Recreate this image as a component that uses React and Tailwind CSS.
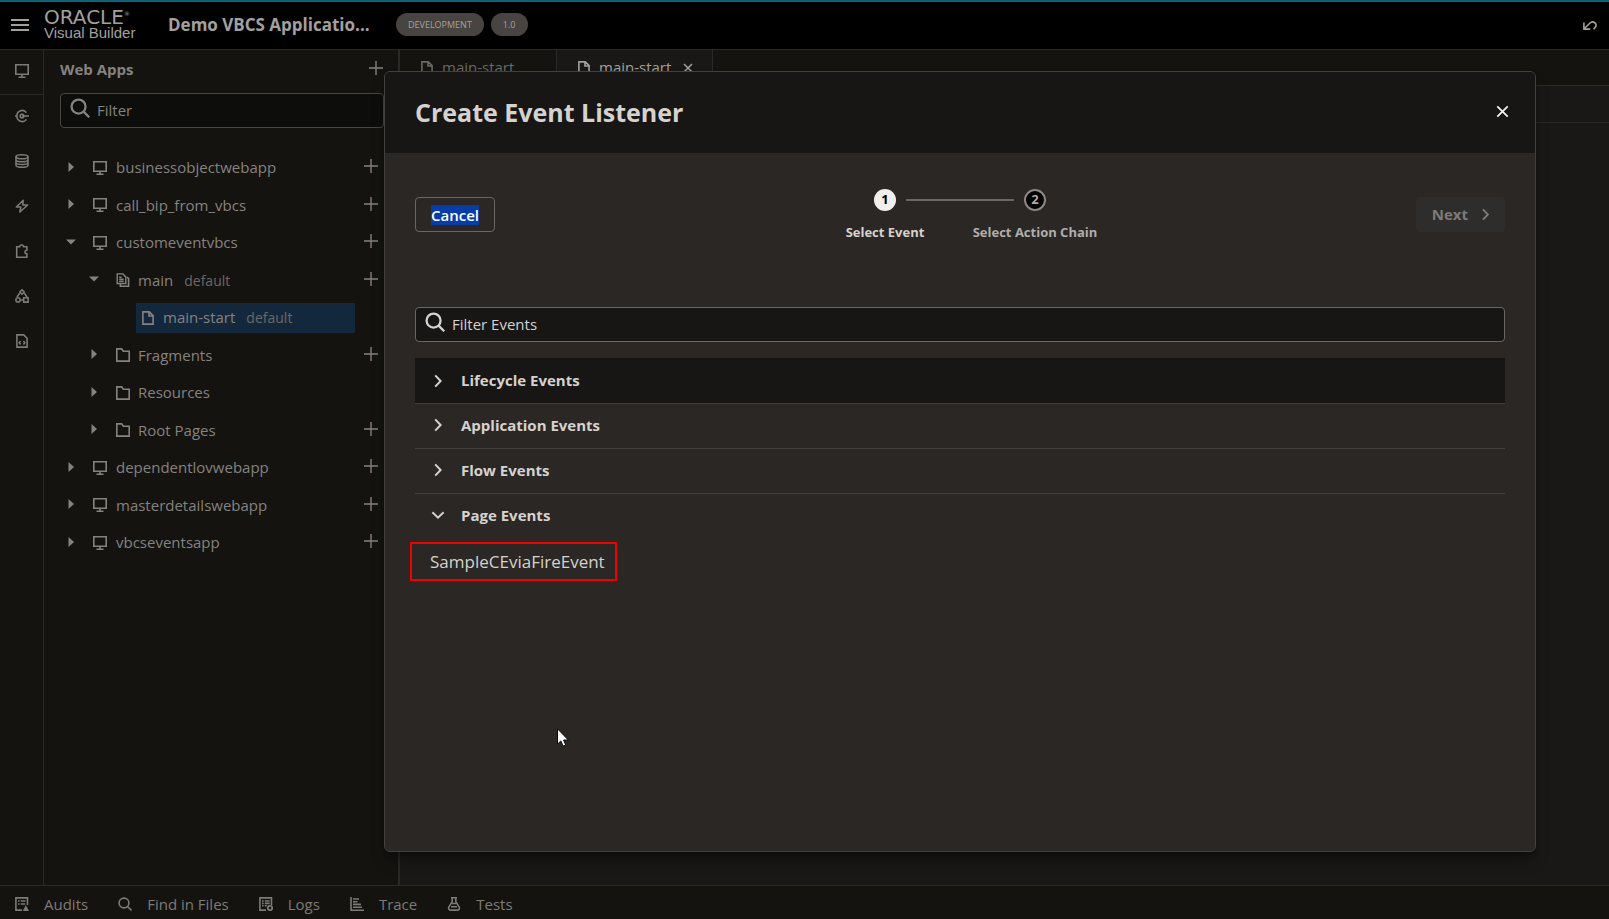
import React, { useState } from 'react';

const Svg = ({ size = 14, className = '', children }) => (
  <svg
    width={size}
    height={size}
    viewBox="0 0 14 14"
    fill="none"
    stroke="currentColor"
    strokeWidth="1.6"
    aria-hidden="true"
    className={`shrink-0 ${className}`}
  >
    {children}
  </svg>
);

const Icons = {
  Monitor: (props) => (
    <Svg {...props}>
      <path d="M.8 .8h12.4v9.4H.8zM7 10v3M3.5 13.2h7" />
    </Svg>
  ),
  Service: (props) => (
    <Svg {...props}>
      <path d="M11.4 3.6A5.2 5.2 0 0 0 2 7a5.2 5.2 0 0 0 9.4 3.4M0 7h2M7 7h7" />
      <circle cx="7" cy="7" r="1.8" />
    </Svg>
  ),
  Database: (props) => (
    <Svg {...props}>
      <ellipse cx="7" cy="2.8" rx="6" ry="2" />
      <path d="M1 2.8v8.4c0 1.1 2.7 2 6 2s6-.9 6-2V2.8M1 5.7c0 1.1 2.7 2 6 2s6-.9 6-2M1 8.5c0 1.1 2.7 2 6 2s6-.9 6-2" />
    </Svg>
  ),
  Bolt: (props) => (
    <Svg {...props}>
      <path d="M8.2 1.2 1.3 8h4.5l-.9 5L12.6 6H7.7z" strokeLinejoin="round" />
    </Svg>
  ),
  Puzzle: (props) => (
    <Svg {...props}>
      <path d="M1.7 2.8h3c0-2.4 4-2.4 4 0h3.2v3.5c-2.6 0-2.6 3.4 0 3.4v3.5H1.7z" />
    </Svg>
  ),
  Shapes: (props) => (
    <Svg {...props}>
      <path d="M7 .8 9.2 3 7 5.2 4.8 3zM8.7 8.7h4.4v4.4H8.7zM4.6 4.2 2 8M9.4 4.2 12 8M5.2 11h3.2" />
      <circle cx="3" cy="10.9" r="2.1" />
    </Svg>
  ),
  Source: (props) => (
    <Svg {...props}>
      <path d="M1.9 .9h6.8l3.4 3.4v8.8H1.9zM5.6 7 4.2 8.7l1.4 1.7M8.4 7l1.4 1.7-1.4 1.7" />
    </Svg>
  ),
  File: (props) => (
    <Svg {...props}>
      <path d="M1.9 .9h6.4l3.8 3.8v8.4H1.9zM8 1v4h4" />
    </Svg>
  ),
  Files: (props) => (
    <Svg {...props}>
      <path d="M1.2 .9h5.6l3 3v6.6H1.2zM3.2 4.2h2.4M3.2 6.2h4.4M3.2 8.2h4.4" strokeWidth="1.4" />
      <path d="M11 4l1.6 1.6v7.6H4.4v-2.4" />
    </Svg>
  ),
  Folder: (props) => (
    <Svg {...props}>
      <path d="M.8 .9h4.9l1.6 2.4h5.9v9.8H.8z" />
    </Svg>
  ),
  Search: (props) => (
    <Svg {...props}>
      <circle cx="6" cy="6" r="4.9" />
      <path d="m9.5 9.5 4 4" />
    </Svg>
  ),
  Plus: (props) => (
    <Svg {...props}>
      <path d="M7 0v14M0 7h14" strokeWidth="1.4" />
    </Svg>
  ),
  Close: (props) => (
    <Svg {...props}>
      <path d="m1.4 1.4 11.2 11.2M12.6 1.4 1.4 12.6" strokeWidth="2" />
    </Svg>
  ),
  ChevronRight: (props) => (
    <Svg {...props}>
      <path d="m4.2 1.4 5.4 5.6-5.4 5.6" strokeWidth="2" />
    </Svg>
  ),
  ChevronDown: (props) => (
    <Svg {...props}>
      <path d="m1.4 4.2 5.6 5.4 5.6-5.4" strokeWidth="2" />
    </Svg>
  ),
  CaretRight: (props) => (
    <Svg {...props}>
      <path d="M4.5 2v10l5.5-5z" fill="currentColor" stroke="none" />
    </Svg>
  ),
  CaretDown: (props) => (
    <Svg {...props}>
      <path d="M2 4.5h10L7 9.5z" fill="currentColor" stroke="none" />
    </Svg>
  ),
  Undo: (props) => (
    <Svg {...props}>
      <path d="M.9 4.5v6.6h6.3M1.2 10.8l5.6-5.6c3.2-3.2 8.4.6 5.4 4.2l-1.7 1.8" />
    </Svg>
  ),
  Audits: (props) => (
    <Svg {...props}>
      <path d="M7 13.1H.9V.9h11.6v7M3 4h1.6M5.8 4h4.8M3 7h1.6M5.8 7h4.4" />
      <path d="M10.8 8 14 14H7.8z" fill="currentColor" stroke="none" />
    </Svg>
  ),
  Logs: (props) => (
    <Svg {...props}>
      <path d="M7 13.1H.9V.9h11.6v7M3 4h1.6M5.8 4h4.8M3 6.4h1.6M5.8 6.4h4.8M3 8.8h1.6M5.8 8.8h2" />
      <circle cx="11" cy="11" r="2.2" strokeWidth="1.8" />
    </Svg>
  ),
  Trace: (props) => (
    <Svg {...props}>
      <path d="M1 0v13.2h13M3 2h6M3 4.7h4.5M3 7.4h8M3 10.2h9" />
    </Svg>
  ),
  Flask: (props) => (
    <Svg {...props}>
      <path d="M4 .8h6M5.2 1v3.6L1.8 10c-.6 1.6 0 3.1 1.6 3.1h7.2c1.6 0 2.2-1.5 1.6-3.1L8.8 4.6V1M5 6.5h4M4 9.8h6" />
    </Svg>
  ),
};

const railItems = [
  { label: 'Web Apps', icon: Icons.Monitor },
  { label: 'Services', icon: Icons.Service },
  { label: 'Business Objects', icon: Icons.Database },
  { label: 'Processes', icon: Icons.Bolt },
  { label: 'Components', icon: Icons.Puzzle },
  { label: 'Layouts', icon: Icons.Shapes },
  { label: 'Source', icon: Icons.Source },
];

const treeItems = [
  { name: 'businessobjectwebapp', icon: Icons.Monitor, level: 0, add: true },
  { name: 'call_bip_from_vbcs', icon: Icons.Monitor, level: 0, add: true },
  { name: 'customeventvbcs', icon: Icons.Monitor, level: 0, add: true, open: true },
  { name: 'main', note: 'default', icon: Icons.Files, level: 1, add: true, open: true },
  { name: 'main-start', note: 'default', icon: Icons.File, level: 2, selected: true },
  { name: 'Fragments', icon: Icons.Folder, level: 1, add: true },
  { name: 'Resources', icon: Icons.Folder, level: 1 },
  { name: 'Root Pages', icon: Icons.Folder, level: 1, add: true },
  { name: 'dependentlovwebapp', icon: Icons.Monitor, level: 0, add: true },
  { name: 'masterdetailswebapp', icon: Icons.Monitor, level: 0, add: true },
  { name: 'vbcseventsapp', icon: Icons.Monitor, level: 0, add: true },
];

const footerItems = [
  { label: 'Audits', icon: Icons.Audits },
  { label: 'Find in Files', icon: Icons.Search },
  { label: 'Logs', icon: Icons.Logs },
  { label: 'Trace', icon: Icons.Trace },
  { label: 'Tests', icon: Icons.Flask },
];

const eventGroups = [
  { name: 'Lifecycle Events', events: [] },
  { name: 'Application Events', events: [] },
  { name: 'Flow Events', events: [] },
  { name: 'Page Events', events: ['SampleCEviaFireEvent'] },
];

const Header = () => (
  <header className="flex h-[50px] shrink-0 items-center border-t-2 border-b border-t-[#0b6478] border-b-[#2a2927] bg-black pr-3 pb-[2px] pl-[11px] text-[#a3a09d]">
    <button type="button" aria-label="Menu" className="flex w-[18px] flex-col gap-[3px]">
      <span className="h-[2px] bg-current" />
      <span className="h-[2px] bg-current" />
      <span className="h-[2px] bg-current" />
    </button>
    <div className="ml-[15px] w-[124px] shrink-0">
      <div className="flex h-4 items-center font-['DejaVu_Sans',sans-serif] text-[20px] leading-4">
        ORACLE<sup className="text-[6px]">®</sup>
      </div>
      <div className="font-['Liberation_Sans',sans-serif] text-[15px] leading-4">Visual Builder</div>
    </div>
    <h1 className="w-[204px] shrink-0 text-[17px] font-bold whitespace-nowrap">Demo VBCS Applicatio...</h1>
    <span className="ml-6 flex h-[23px] items-center rounded-full bg-[#484441] px-3 text-[9px] font-medium">DEVELOPMENT</span>
    <span className="ml-[7px] flex h-[23px] items-center rounded-full bg-[#484441] px-3 text-[9px] font-medium">1.0</span>
    <button type="button" aria-label="Undo" className="ml-auto">
      <Icons.Undo />
    </button>
  </header>
);

const Rail = () => (
  <nav className="flex w-11 shrink-0 flex-col border-r border-[#2a2927]">
    {railItems.map(({ label, icon: Icon }) => (
      <button
        key={label}
        type="button"
        aria-label={label}
        className="flex h-[45px] items-center justify-center border-[#2a2927] pb-[3px] text-[#7d7a77] first:border-b"
      >
        <Icon />
      </button>
    ))}
  </nav>
);

const TreeRow = ({ item }) => {
  const Icon = item.icon;
  const indent = ['pl-5', 'pl-[43px]', 'pl-[92px]'][item.level];
  const gap = item.level === 0 ? 'gap-[9px]' : 'gap-2';

  return (
    <li className={`flex h-[37px] items-center even:h-[38px] ${indent}`}>
      {!item.selected && (
        <button type="button" aria-label={`Toggle ${item.name}`} className="mr-[15px] pb-[2px]">
          {item.open ? <Icons.CaretDown /> : <Icons.CaretRight />}
        </button>
      )}
      <a
        href="#"
        className={`flex h-[30px] items-center ${gap} ${item.selected ? 'w-[219px] bg-[#14283d] pl-[5px]' : ''}`}
      >
        <Icon />
        <span>{item.name}</span>
        {item.note && <span className="ml-[3px] text-[14px] text-[#6b6865]">{item.note}</span>}
      </a>
      {item.add && (
        <button type="button" aria-label={`Add to ${item.name}`} className="mr-5 ml-auto pb-[3px]">
          <Icons.Plus />
        </button>
      )}
    </li>
  );
};

const Sidebar = () => (
  <aside className="w-[356px] shrink-0 border-r-2 border-[#2a2927] text-[15px] text-[#85827f]">
    <div className="flex h-[43px] items-center justify-between pr-[15px] pb-1 pl-4">
      <h2 className="font-bold">Web Apps</h2>
      <button type="button" aria-label="Add web app" className="pb-1">
        <Icons.Plus />
      </button>
    </div>
    <label className="mr-[14px] ml-4 flex h-[35px] items-center gap-[7px] rounded-sm border border-[#484542] bg-[#0d0d0b] pl-[9px]">
      <Icons.Search size={20} className="mb-[6px]" />
      <input
        type="text"
        aria-label="Filter"
        placeholder="Filter"
        className="min-w-0 flex-1 bg-transparent outline-none placeholder:text-[#85827f]"
      />
    </label>
    <ul className="mt-[21px]">
      {treeItems.map((item) => (
        <TreeRow key={item.name} item={item} />
      ))}
    </ul>
  </aside>
);

const Editor = () => (
  <main className="min-w-0 flex-1 bg-[#191816] text-[15px] text-[#6b6865]">
    <div className="flex h-9 border-b border-[#2a2927] bg-[#141310]">
      <button type="button" className="flex w-[157px] items-center gap-2 border-r border-[#2a2927] pl-5">
        <Icons.File />
        main-start
      </button>
      <div className="flex w-[156px] items-center border-r border-[#2a2927] bg-[#191816] pl-5 text-[#a3a09d]">
        <button type="button" className="flex items-center gap-2">
          <Icons.File />
          main-start
        </button>
        <button type="button" aria-label="Close tab" className="ml-3">
          <Icons.Close size={10} />
        </button>
      </div>
    </div>
    <div className="h-[37px] border-b border-[#2a2927]" />
  </main>
);

const Stepper = () => (
  <ol className="flex text-[13px] font-bold">
    <li className="relative flex w-[150px] flex-col items-center gap-3 text-[#d5d2cf]">
      <span className="flex size-[22px] items-center justify-center rounded-full bg-[#f1efed] text-black">1</span>
      Select Event
      <span className="absolute top-[10px] left-[96px] h-[2px] w-[108px] bg-[#6b6662]" />
    </li>
    <li className="flex w-[150px] flex-col items-center gap-3 text-[#b0adaa]">
      <span className="flex size-[22px] items-center justify-center rounded-full border-2 border-[#8b8885] bg-black">2</span>
      Select Action Chain
    </li>
  </ol>
);

const EventGroup = ({ group, isOpen, isFirst, onToggle }) => (
  <li>
    <button
      type="button"
      onClick={onToggle}
      aria-expanded={isOpen}
      className={`flex h-[45px] w-full items-center gap-4 pl-4 font-bold ${isFirst ? 'bg-[#171614]' : 'border-t border-[#423e3b] pb-[2px]'}`}
    >
      {isOpen ? <Icons.ChevronDown /> : <Icons.ChevronRight />}
      {group.name}
    </button>
    {isOpen &&
      group.events.map((name) => (
        <button key={name} type="button" className="relative mt-px flex h-[45px] items-center pr-3 pl-[15px] text-[17px]">
          {name}
          <span className="absolute inset-y-[3px] right-0 -left-[5px] border-2 border-[#f00000]" />
        </button>
      ))}
  </li>
);

const CreateEventDialog = () => {
  const [openGroup, setOpenGroup] = useState('Page Events');

  return (
    <section
      role="dialog"
      aria-labelledby="dialog-title"
      className="absolute top-[71px] right-[73px] bottom-[67px] left-96 overflow-hidden rounded-md border border-[#423f3c] bg-[#2b2724] text-[15px] text-[#d5d2cf] shadow-lg shadow-black/40"
    >
      <div className="flex h-[81px] items-center justify-between bg-[#171614] pr-[26px] pl-[30px]">
        <h2 id="dialog-title" className="text-[25px] font-bold">Create Event Listener</h2>
        <button type="button" aria-label="Close" className="pb-[2px] text-[#f1efed]">
          <Icons.Close size={13} />
        </button>
      </div>

      <div className="px-[30px] pt-9">
        <div className="flex h-[118px] items-start justify-between">
          <div className="flex flex-1 pt-2">
            <button type="button" className="flex h-[35px] items-center rounded-sm border border-[#6b6662] px-[15px] font-semibold text-white">
              <span className="bg-[#083ca6] leading-5">Cancel</span>
            </button>
          </div>
          <Stepper />
          <div className="flex flex-1 justify-end pt-2">
            <button type="button" disabled className="flex h-[35px] items-center gap-[11px] rounded-sm bg-[#2f2d2b] pr-[13px] pl-4 font-bold text-[#7d7a77]">
              Next
              <Icons.ChevronRight size={13} />
            </button>
          </div>
        </div>

        <label className="flex h-[35px] items-center gap-[7px] rounded-sm border border-[#6b6662] bg-[#171614] pl-[9px]">
          <Icons.Search size={20} className="mb-[6px]" />
          <input
            type="text"
            aria-label="Filter Events"
            placeholder="Filter Events"
            className="min-w-0 flex-1 bg-transparent outline-none placeholder:text-[#d5d2cf]"
          />
        </label>

        <ul className="mt-4">
          {eventGroups.map((group, index) => (
            <EventGroup
              key={group.name}
              group={group}
              isOpen={openGroup === group.name}
              isFirst={index === 0}
              onToggle={() => setOpenGroup(openGroup === group.name ? null : group.name)}
            />
          ))}
        </ul>
      </div>
    </section>
  );
};

const Footer = () => (
  <footer className="flex h-[34px] shrink-0 items-center gap-[30px] border-t border-[#2a2927] pt-[3px] pl-[15px] text-[15px] text-[#7d7a77]">
    {footerItems.map(({ label, icon: Icon }) => (
      <button key={label} type="button" className="flex items-center gap-[15px]">
        <Icon />
        {label}
      </button>
    ))}
  </footer>
);

const App = () => (
  <div className="relative flex h-screen flex-col overflow-hidden bg-[#141310] font-['Open_Sans',sans-serif]">
    <Header />
    <div className="flex min-h-0 flex-1">
      <Rail />
      <Sidebar />
      <Editor />
    </div>
    <Footer />
    <CreateEventDialog />

    {/* Mouse pointer */}
    <svg width="12" height="19" viewBox="0 0 12 19" aria-hidden="true" className="absolute top-[728px] left-[557px]">
      <path d="M.5 .8v15.4l3.4-3.3 2.2 5.2 2.6-1.1-2.2-5h4.8z" fill="white" stroke="#0b0b1a" />
    </svg>
  </div>
);

export default App;
